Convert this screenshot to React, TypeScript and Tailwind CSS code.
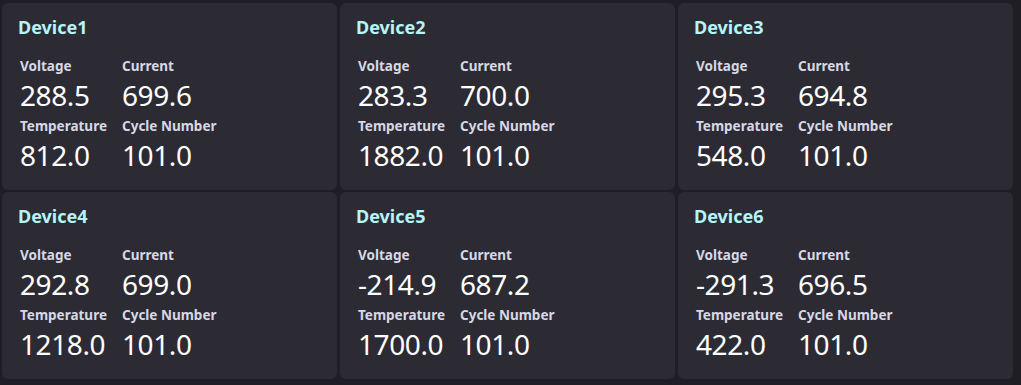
const devices = [
  { name: "Device1", voltage: "288.5", current: "699.6", temperature: "812.0", cycle: "101.0" },
  { name: "Device2", voltage: "283.3", current: "700.0", temperature: "1882.0", cycle: "101.0" },
  { name: "Device3", voltage: "295.3", current: "694.8", temperature: "548.0", cycle: "101.0" },
  { name: "Device4", voltage: "292.8", current: "699.0", temperature: "1218.0", cycle: "101.0" },
  { name: "Device5", voltage: "-214.9", current: "687.2", temperature: "1700.0", cycle: "101.0" },
  { name: "Device6", voltage: "-291.3", current: "696.5", temperature: "422.0", cycle: "101.0" },
];

function Metric({ label, value }: { label: string; value: string }) {
  return (
    <div className="flex flex-col">
      <span className="text-[13.5px] font-bold leading-[20px] text-[#d8d8e4]">{label}</span>
      <span className="mt-[1px] text-[28px] leading-[36px] tracking-[-0.4px] text-white">{value}</span>
    </div>
  );
}

function DeviceCard({ device }: { device: (typeof devices)[number] }) {
  return (
    <div className="h-[187px] rounded-md bg-[#2c2b34] pt-[12px] pl-[16px]">
      <h2 className="text-[18px] font-bold leading-[24px] text-[#b4f6f8]">{device.name}</h2>
      <div className="mt-[17px] grid grid-cols-[102px_1fr] gap-y-[3px] pl-[2px]">
        <Metric label="Voltage" value={device.voltage} />
        <Metric label="Current" value={device.current} />
        <Metric label="Temperature" value={device.temperature} />
        <Metric label="Cycle Number" value={device.cycle} />
      </div>
    </div>
  );
}

export default function App() {
  return (
    <div
      className="h-[385px] w-[1021px] bg-[#1f1e25] pt-[3px] pl-[2px]"
      style={{ fontFamily: '"Noto Sans", "Open Sans", sans-serif' }}
    >
      <div className="grid w-[1011px] grid-cols-3 gap-x-[3px] gap-y-[2px]">
        {devices.map((d) => (
          <DeviceCard key={d.name} device={d} />
        ))}
      </div>
    </div>
  );
}
